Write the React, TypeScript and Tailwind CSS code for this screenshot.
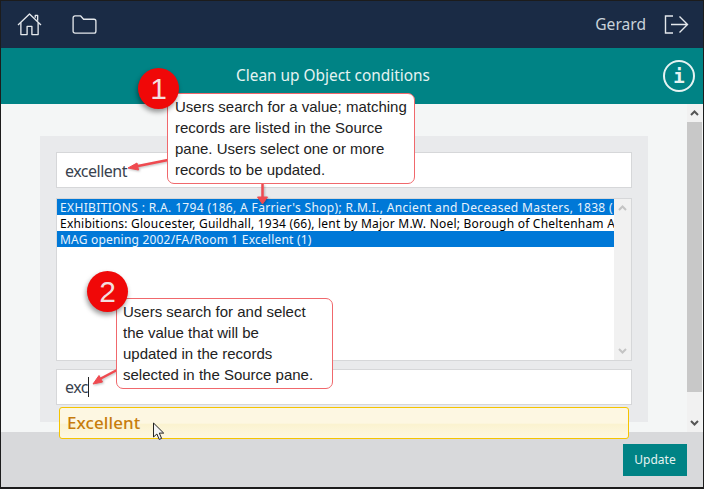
const ROWS = [
  { text: "EXHIBITIONS : R.A. 1794 (186, A Farrier's Shop); R.M.I., Ancient and Deceased Masters, 1838 (1), Bristol", cls: "bg-[#0078d7] text-[#e8f3fc] tracking-[0.35px]" },
  { text: "Exhibitions: Gloucester, Guildhall, 1934 (66), lent by Major M.W. Noel; Borough of Cheltenham Art Gallery", cls: "text-black tracking-[0.22px]" },
  { text: "MAG opening 2002/FA/Room 1 Excellent (1)", cls: "bg-[#0078d7] text-[#e8f3fc] tracking-[0.2px]" },
];

function Chevron({ down, dark }: { down?: boolean; dark?: boolean }) {
  return (
    <svg width="9" height="6" viewBox="0 0 9 6" className={dark ? "text-[#555555]" : "text-[#c4c4c4]"}>
      <path d={down ? "M1 1l3.5 3.5L8 1" : "M1 5l3.5-3.5L8 5"} fill="none" stroke="currentColor" strokeWidth="2" />
    </svg>
  );
}

function Badge({ label, className }: { label: string; className: string }) {
  return (
    <div className={`absolute w-[41px] h-[41px] rounded-full bg-[#f00808] text-[#f3dede] text-[30px] leading-[41px] text-center font-['Liberation_Sans',sans-serif] shadow-[-1px_3px_5px_rgba(0,0,0,0.4)] ${className}`}>
      {label}
    </div>
  );
}

function Callout({ lines, className }: { lines: string[]; className: string }) {
  return (
    <div className={`absolute bg-white border border-[#f0686c] rounded-[7px] text-[15px] leading-[21px] text-[#222222] font-['Liberation_Sans',sans-serif] whitespace-nowrap ${className}`}>
      {lines.map((l) => <div key={l}>{l}</div>)}
    </div>
  );
}

export default function App() {
  return (
    <div className="relative w-[704px] h-[489px] overflow-hidden flex flex-col bg-[#d8d9db] border-t border-l border-r border-b-2 border-[#1c1c1c] font-['Noto_Sans',sans-serif]">
      <header className="h-[47px] flex-none bg-[#1a2b45] flex items-center text-[#e4e8ec]">
        <svg width="25" height="23" viewBox="0 0 26 24" className="ml-[16px]" fill="none" stroke="currentColor" strokeWidth="1.4" strokeLinejoin="round">
          <path d="M1 12.500L13 1l12 11.500" />
          <path d="M4 10v12.500h6.500V14h5v8.500H22V10" />
          <path d="M19 5V2.500h2.500V8" />
        </svg>
        <svg width="25" height="19" viewBox="0 0 26 20" className="ml-[30px]" fill="none" stroke="currentColor" strokeWidth="1.4" strokeLinejoin="round">
          <path d="M1 3a2 2 0 0 1 2-2h6l3 3.500h11a2 2 0 0 1 2 2V17a2 2 0 0 1-2 2H3a2 2 0 0 1-2-2z" />
        </svg>
        <span className="ml-auto text-[15.6px] text-[#c9d2da]">Gerard</span>
        <svg width="25" height="19" viewBox="0 0 25 19" className="ml-[18px] mr-[14px]" fill="none" stroke="currentColor" strokeWidth="1.4">
          <path d="M9 1H1.500v17H9" />
          <path d="M7 9.500h16.500M15.500 1.500l8 8-8 8" />
        </svg>
      </header>

      <div className="h-[56px] flex-none bg-[#008385] flex items-center text-[#e6f3f2]">
        <div className="ml-[235px] text-[15.4px]">Clean up Object conditions</div>
        <div className="ml-auto mr-[8px] w-[32px] h-[32px] rounded-full border-2 border-[#e6f3f2] flex items-center justify-center text-[19px] font-bold font-['DejaVu_Sans_Mono',monospace]">i</div>
      </div>

      <div className="h-[328px] flex-none bg-[#f4f6f6] flex overflow-hidden">
        <div className="flex-1 pl-[39px] pr-[39px] pt-[32px]">
          <div className="h-[286px] bg-[#e9eaec] px-[16px] pt-[16px] flex flex-col">
            <div className="h-[36px] bg-white border border-[#d6d7d9] pl-[8px] text-[16px] leading-[36px] tracking-[-0.5px] text-[#39424e]">excellent</div>
            <div className="mt-[10px] h-[163px] bg-white border border-[#d6d7d9] flex text-[12px] leading-[18px]">
              <div className="w-[557px] overflow-hidden">
                {ROWS.map((r) => (
                  <div key={r.text} className={`h-[16px] pl-[3px] whitespace-nowrap ${r.cls}`}>{r.text}</div>
                ))}
              </div>
              <div className="flex-1 bg-[#f1f1f1] flex flex-col items-center justify-between py-[6px]">
                <Chevron />
                <Chevron down />
              </div>
            </div>
            <div className="mt-[8px] h-[36px] bg-white border border-[#d6d7d9] pl-[8px] text-[16px] leading-[36px] tracking-[-0.5px] text-[#39424e] flex items-center">
              exc<span className="w-px h-[20px] bg-[#222222]" />
            </div>
          </div>
        </div>
        <div className="w-[15px] mr-[1px] flex-none bg-[#f1f1f1] flex flex-col">
          <div className="h-[18px] flex items-center justify-center"><Chevron dark /></div>
          <div className="h-[270px] bg-[#c8c8c8]" />
          <div className="flex-1 flex items-end justify-center pb-[6px]"><Chevron down dark /></div>
        </div>
      </div>

      <div className="flex-1 flex justify-end items-start pt-[12px] pr-[16px]">
        <button className="w-[64px] h-[32px] bg-[#008385] text-[#e6f3f2] text-[12px]">Update</button>
      </div>

      {/* dropdown over the form */}
      <div className="absolute left-[58px] top-[406px] w-[570px] h-[32px] rounded-[3px] border border-[#f5c400] bg-[linear-gradient(#fdf7e2_0%,#fdf7e2_50%,#fbf3d0_55%,#fdf7e2_100%)] pl-[7px] text-[17px] leading-[30px] font-medium text-[#c77c0c] tracking-[0.1px]">
        Excellent
      </div>

      {/* cursor */}
      <svg className="absolute left-[151px] top-[421px]" width="14" height="20" viewBox="0 0 14 20">
        <path d="M1.5 1v14l3.4-3 2.3 5.4 2.400-1-2.300-5.300h4.400z" fill="#f4f4f4" stroke="#222222" strokeWidth="1" />
      </svg>

      {/* annotations */}
      <svg className="absolute left-0 top-0 pointer-events-none drop-shadow-[1px_1px_1px_rgba(0,0,0,0.25)]" width="704" height="489" viewBox="0 0 704 489">
        <g stroke="#ef4a50" strokeWidth="2.500" fill="#ef4a50">
          <path d="M167 159L132 166" />
          <path d="M127 167l9-5 1.500 7z" strokeWidth="1" />
          <path d="M261.500 183V196" fill="none" />
          <path d="M256.500 196h10l-5 7z" strokeWidth="1" />
          <path d="M116 369L97 379" />
          <path d="M92 383l6-8.500 3.500 6.500z" strokeWidth="1" />
        </g>
      </svg>
      <Callout className="left-[166px] top-[92px] w-[248px] h-[91px] pl-[7px] pt-[2px]" lines={["Users search for a value; matching", "records are listed in the Source", "pane. Users select one or more", "records to be updated."]} />
      <Callout className="left-[115px] top-[297px] w-[217px] h-[91px] pl-[6px] pt-[2px]" lines={["Users search for and select", "the value that will be", "updated in the records", "selected in the Source pane."]} />
      <Badge label="1" className="left-[137px] top-[67px]" />
      <Badge label="2" className="left-[86px] top-[270px]" />
    </div>
  );
}
